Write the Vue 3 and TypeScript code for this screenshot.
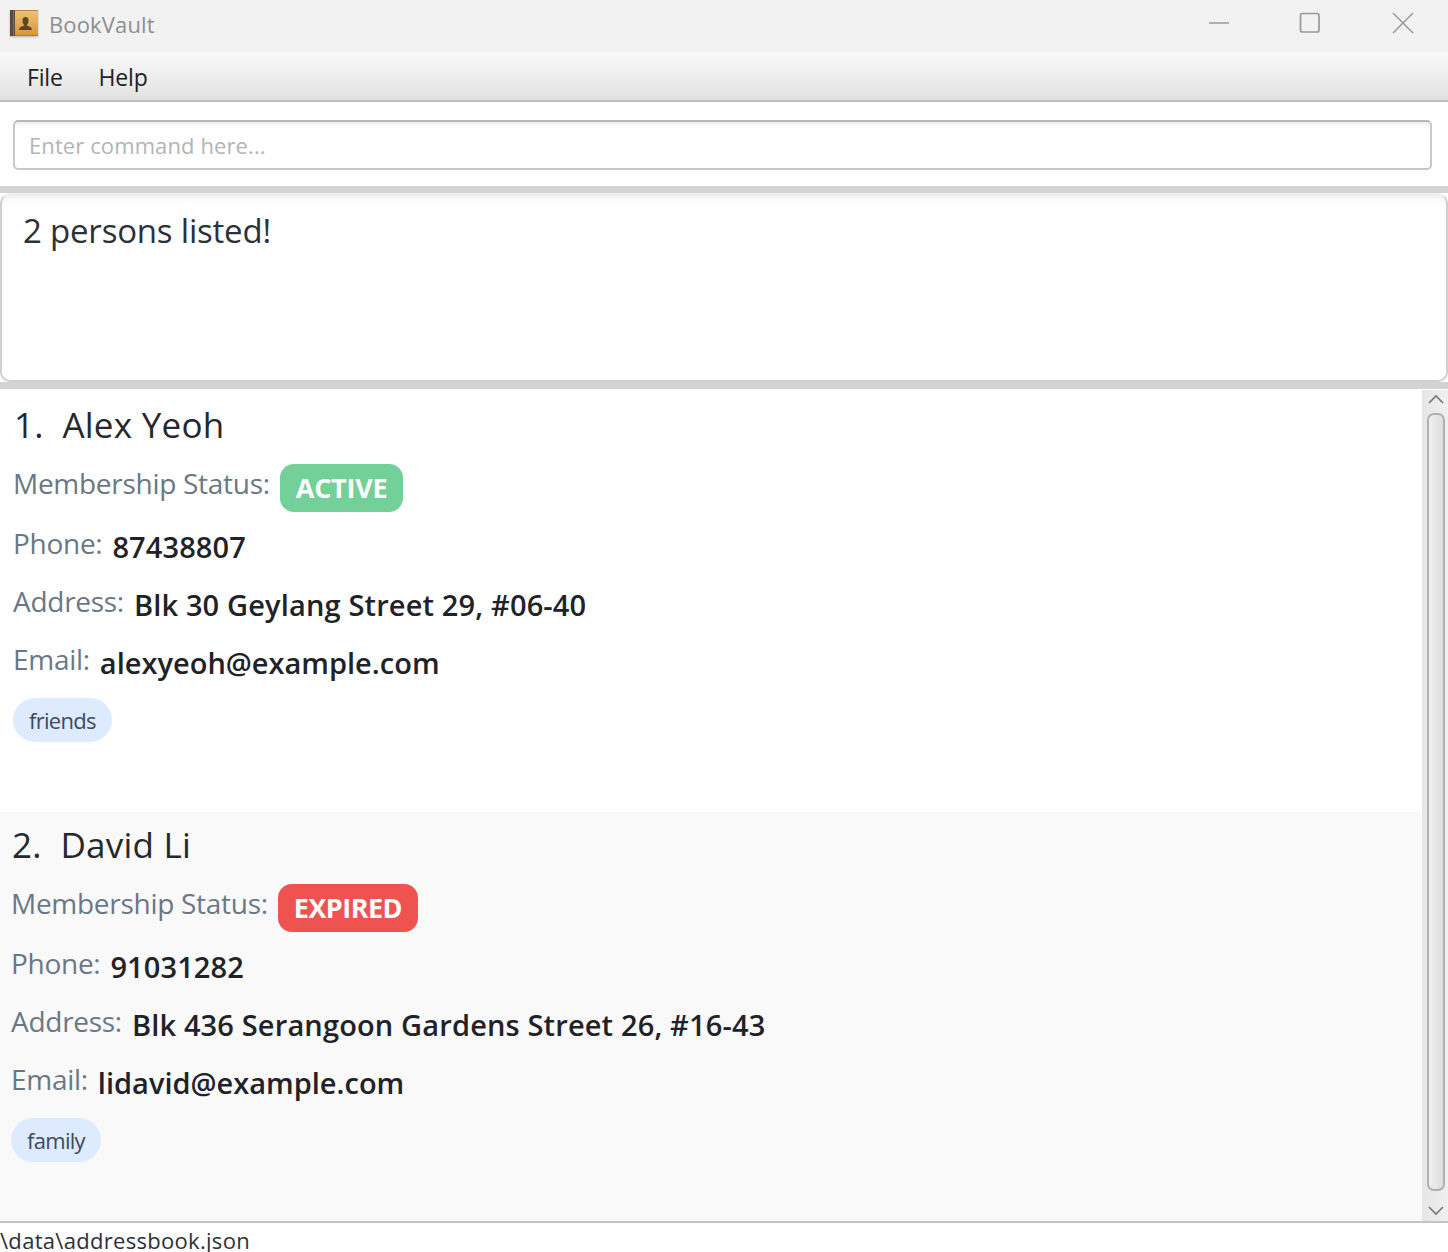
<script setup lang="ts">
interface Person {
  name: string
  status: string
  statusClass: string
  phone: string
  address: string
  email: string
  tag: string
  cardClass: string
}
const persons: Person[] = [
  { name: '1.  Alex Yeoh', status: 'ACTIVE', statusClass: 'active', phone: '87438807', address: 'Blk 30 Geylang Street 29, #06-40', email: 'alexyeoh@example.com', tag: 'friends', cardClass: 'odd' },
  { name: '2.  David Li', status: 'EXPIRED', statusClass: 'expired', phone: '91031282', address: 'Blk 436 Serangoon Gardens Street 26, #16-43', email: 'lidavid@example.com', tag: 'family', cardClass: 'even' }
]
</script>

<template>
  <div class="window">
    <header class="titlebar">
      <div class="title-left">
        <svg class="app-icon" viewBox="0 0 28 26" width="28" height="26">
          <defs>
            <linearGradient id="bookg" x1="0" y1="0" x2="0" y2="1">
              <stop offset="0" stop-color="#f0c272" />
              <stop offset="1" stop-color="#d6953a" />
            </linearGradient>
          </defs>
          <rect x="0" y="0" width="28" height="26" fill="url(#bookg)" />
          <rect x="0" y="0" width="28" height="1" fill="#b98a45" />
          <rect x="0" y="25" width="28" height="1" fill="#a98247" />
          <rect x="0" y="0" width="5" height="26" fill="#5d4a42" />
          <rect x="3" y="0" width="1" height="26" fill="#7d6a60" />
          <path d="M9 20c0-3 3-3.500 5.500-4.500-1.500-1.500-2-3-2-5 0-2 1-3.500 3-3.500s3 1.500 3 3.500c0 2-.5 3.500-2 5 2.500 1 5.500 1.500 5.500 4.500z" fill="#5f4522" />
        </svg>
        <span class="app-title">BookVault</span>
      </div>
      <div class="win-controls">
        <svg class="ctl-min" width="22" height="22" viewBox="0 0 22 22"><path d="M1 11h20" stroke="#999" stroke-width="1.500" fill="none" /></svg>
        <svg width="22" height="22" viewBox="0 0 22 22"><rect x="1.500" y="1.500" width="18.500" height="18.500" rx="2" stroke="#999" stroke-width="1.700" fill="none" /></svg>
        <svg width="22" height="22" viewBox="0 0 22 22"><path d="M1 1l20 20M21 1L1 21" stroke="#999" stroke-width="1.500" fill="none" /></svg>
      </div>
    </header>

    <nav class="menubar">
      <span class="menu-item">File</span>
      <span class="menu-item">Help</span>
    </nav>

    <section class="command-pane">
      <div class="command-input">Enter command here...</div>
    </section>

    <section class="result-pane">
      <div class="result-text">2 persons listed!</div>
    </section>

    <main class="list-wrap">
      <div class="list">
        <article v-for="p in persons" :key="p.name" class="card" :class="p.cardClass">
          <div class="name">{{ p.name }}</div>
          <div class="row status-row">
            <span class="label">Membership Status:</span>
            <span class="badge" :class="p.statusClass">{{ p.status }}</span>
          </div>
          <div class="row"><span class="label">Phone:</span><span class="value phone">{{ p.phone }}</span></div>
          <div class="row"><span class="label">Address:</span><span class="value address">{{ p.address }}</span></div>
          <div class="row"><span class="label">Email:</span><span class="value email">{{ p.email }}</span></div>
          <span class="tag">{{ p.tag }}</span>
        </article>
      </div>
      <aside class="scrollbar">
        <svg class="arrow" width="16" height="10" viewBox="0 0 16 10"><path d="M1 9l7-7 7 7" stroke="#777" stroke-width="1.600" fill="none" /></svg>
        <div class="thumb"></div>
        <svg class="arrow" width="16" height="10" viewBox="0 0 16 10"><path d="M1 1l7 7 7-7" stroke="#777" stroke-width="1.600" fill="none" /></svg>
      </aside>
    </main>

    <footer class="statusbar">\data\addressbook.json</footer>
  </div>
</template>

<style scoped>
.window {
  width: 1448px;
  height: 1252px;
  display: flex;
  flex-direction: column;
  overflow: hidden;
  background: #fff;
  font-family: "Open Sans", "Noto Sans", sans-serif;
  color: #262c33;
}
.titlebar {
  height: 52px;
  flex: none;
  background: #f2f2f2;
  display: flex;
  align-items: center;
  justify-content: space-between;
}
.title-left {
  display: flex;
  align-items: center;
  padding-left: 10px;
  gap: 12px;
  height: 46px;
  margin-bottom: 6px;
}
.app-icon {
  filter: drop-shadow(0 1px 1px rgba(0, 0, 0, 0.25));
}
.app-title {
  font-size: 22px;
  color: #8e8e8e;
  letter-spacing: 0.14px;
  padding-top: 2px;
  margin-left: -1px;
}
.win-controls {
  display: flex;
  gap: 71px;
  padding-right: 34px;
  margin-bottom: 6px;
}
.ctl-min {
  margin-right: -2px;
}
.menubar {
  height: 48px;
  flex: none;
  display: flex;
  align-items: center;
  gap: 36px;
  padding-left: 27px;
  background: linear-gradient(#fafafa, #e2e2e2);
  border-bottom: 2px solid #bcbcbc;
  box-sizing: content-box;
  font-size: 23px;
  color: #222;
  letter-spacing: -0.2px;
}
.menu-item {
  padding-top: 1px;
}
.command-pane {
  height: 83px;
  flex: none;
  margin-top: 1px;
  box-sizing: border-box;
  padding: 17px 16px 16px 13px;
  background: #fff;
  border-radius: 6px;
}
.command-input {
  height: 50px;
  box-sizing: border-box;
  border: 2px solid #c8c8c8;
  border-top-color: #b9b9b9;
  border-radius: 5px;
  padding-left: 14px;
  display: flex;
  align-items: center;
  font-size: 22px;
  letter-spacing: 0.1px;
  color: #b4b4b4;
  box-shadow: inset 0 5px 5px -4px #e4e4e4;
}
.result-pane {
  height: 203px;
  flex: none;
  box-sizing: border-box;
  border-top: 7px solid #d3d3d3;
  border-bottom: 7px solid #d3d3d3;
  background: #fff;
}
.result-text {
  height: 100%;
  box-sizing: border-box;
  padding: 14px 21px;
  border: 2px solid #cfcfcf;
  border-top-color: #f0f0f0;
  border-radius: 10px;
  font-size: 33px;
  line-height: 44px;
  letter-spacing: -0.2px;
  color: #2b3138;
  box-shadow: inset 0 7px 6px -5px #e8e8e8;
}
.list-wrap {
  margin-top: 1px;
  height: 831px;
  flex: none;
  display: flex;
}
.list {
  flex: 1;
  display: flex;
  flex-direction: column;
}
.card {
  display: flex;
  flex-direction: column;
  align-items: flex-start;
  box-sizing: border-box;
}
.card.odd {
  height: 422px;
  padding-top: 10px;
  padding-left: 13px;
  background: #fff;
}
.card.even {
  flex: 1;
  padding-top: 8px;
  padding-left: 11px;
  background: #f9f9f9;
}
.name {
  font-size: 35px;
  line-height: 50px;
  white-space: pre;
  letter-spacing: 0.25px;
  margin-left: 1px;
  color: #24292f;
}
.row {
  display: flex;
  align-items: baseline;
  gap: 10px;
  height: 58px;
  padding-top: 9px;
  box-sizing: border-box;
}
.row .label {
  position: relative;
  top: -4px;
}
.status-row {
  height: 60px;
  margin: 6px 0 2px;
  align-items: center;
  padding-top: 4px;
}
.status-row .label {
  top: -5px;
}
.label {
  font-size: 28px;
  letter-spacing: -0.28px;
  color: #6b7785;
}
.value {
  font-size: 29px;
  font-weight: 600;
  color: #1f2328;
}
.value.phone {
  letter-spacing: 0.1px;
}
.value.address {
  letter-spacing: 0.15px;
}
.value.email {
  letter-spacing: 0;
}
.badge {
  height: 48px;
  display: inline-flex;
  align-items: center;
  padding: 0 16px 2px;
  box-sizing: border-box;
  border-radius: 14px;
  color: #fff;
  font-size: 27px;
  font-weight: 700;
  letter-spacing: -0.27px;
}
.badge.active {
  background: #72d098;
}
.badge.expired {
  background: #ef5350;
  letter-spacing: -0.55px;
}
.tag {
  margin-top: 6px;
  height: 44px;
  display: inline-flex;
  align-items: center;
  padding: 0 16px;
  border-radius: 22px;
  background: #deebff;
  color: #3b4a63;
  font-size: 22px;
  letter-spacing: -0.7px;
}
.scrollbar {
  width: 26px;
  flex: none;
  display: flex;
  flex-direction: column;
  align-items: center;
  justify-content: space-between;
  padding: 4px 0 5px 2px;
  box-sizing: border-box;
  background: linear-gradient(90deg, #e6e6e6, #f0f0f0);
}
.arrow {
  flex: none;
}
.thumb {
  width: 18px;
  height: 778px;
  margin-bottom: 6px;
  box-sizing: border-box;
  border: 2px solid #b0b0b0;
  border-radius: 7px;
  background: linear-gradient(90deg, #f0f0f0, #dedede);
}
.statusbar {
  height: 31px;
  flex: none;
  box-sizing: border-box;
  border-top: 2px solid #c4c4c4;
  font-size: 22px;
  line-height: 35px;
  letter-spacing: 0.3px;
  color: #2b3138;
  white-space: nowrap;
}
</style>
